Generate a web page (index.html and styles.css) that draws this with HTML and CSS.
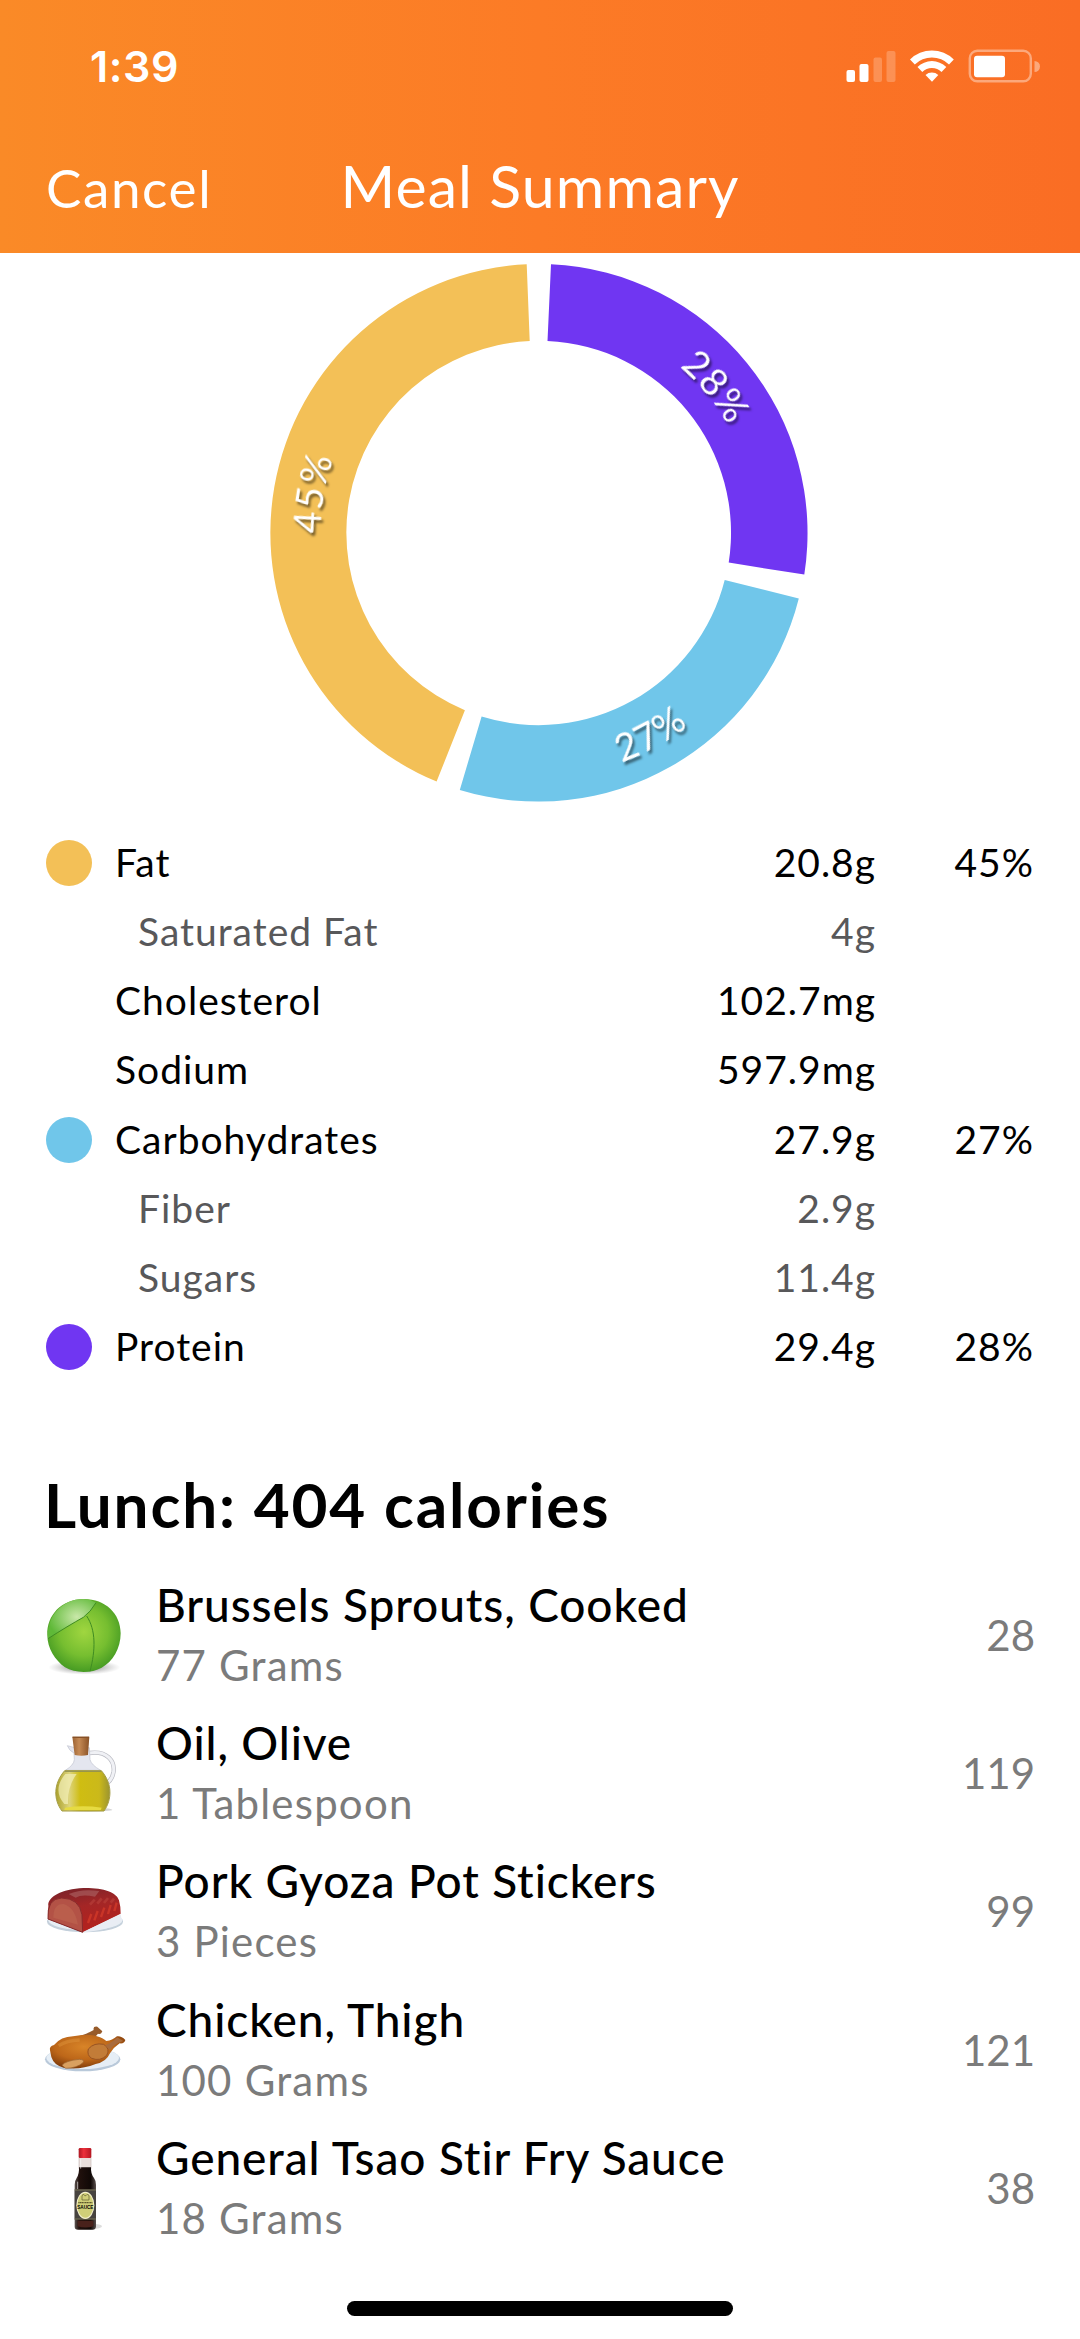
FILE: index.html
```html
<!DOCTYPE html>
<html lang="en">
<head>
    <meta charset="UTF-8">
    <meta name="viewport" content="width=device-width, initial-scale=1.0">
    <title>Meal Summary</title>
    <link rel="stylesheet" href="styles.css">
</head>
<body>
    <header class="header">
        <div class="status-bar">
            <span class="time">1:39</span>
            <svg class="status-icons" width="194" height="36" viewBox="0 0 194 36" fill="#fff">
                <rect x="0.5" y="22" width="8.5" height="12" rx="2"/>
                <rect x="13.5" y="16" width="9" height="18" rx="2"/>
                <rect x="27.5" y="9.5" width="8.5" height="24.5" rx="2" opacity=".22"/>
                <rect x="40.5" y="3" width="9" height="31" rx="2" opacity=".22"/>
                <path d="M64 11.5 A31 31 0 0 1 107.800 11.500 L103 16.500 A24.500 24.500 0 0 0 68.800 16.500 Z"/>
                <path d="M71.500 19 A20.500 20.500 0 0 1 100.300 19 L95.500 24 A13.500 13.500 0 0 0 76.300 24 Z"/>
                <path d="M79.500 27 A9.500 9.500 0 0 1 92.300 27 L86 33.800 Z"/>
                <rect x="123.8" y="2.8" width="61" height="30.5" rx="7.5" fill="none" stroke="#fff" stroke-width="2.4" opacity=".4"/>
                <rect x="128" y="7.7" width="31" height="21.5" rx="3"/>
                <path d="M188.500 13 a5.500 5.500 0 0 1 0 11 Z" opacity=".4"/>
            </svg>
        </div>
        <nav class="nav-bar">
            <a href="#" class="cancel">Cancel</a>
            <h1 class="title">Meal Summary</h1>
        </nav>
    </header>

    <main>
        <svg class="chart" width="1080" height="575" viewBox="0 253 1080 575">
            <defs>
                <path id="arc-top" d="M-109 -188.8 A218 218 0 0 1 109 -188.8"/>
                <path id="arc-bottom" d="M-122 211.3 A244 244 0 0 0 122 211.3"/>
            </defs>
            <path class="protein" d="M551 264.3 A269 269 0 0 1 804.3 574.6 L728.7 562.6 A192 192 0 0 0 547.5 341 Z"/>
            <path class="carbs" d="M798.8 598.6 A269 269 0 0 1 459.8 790 L481.6 716.5 A192 192 0 0 0 724.7 580 Z"/>
            <path class="fat" d="M436.6 781.6 A269 269 0 0 1 526.7 264.3 L529.7 341 A192 192 0 0 0 464.9 710.2 Z"/>
            <g class="chart-labels" transform="translate(538.5 533)">
                <text transform="rotate(50.5)"><textPath href="#arc-top" startOffset="50%">28%</textPath></text>
                <text transform="rotate(-29)"><textPath href="#arc-bottom" startOffset="50%">27%</textPath></text>
                <text transform="rotate(280)"><textPath href="#arc-top" startOffset="50%">45%</textPath></text>
            </g>
        </svg>

        <ul class="nutrients">
            <li><i class="dot fat"></i><span class="label">Fat</span><span class="value">20.8g</span><span class="percent">45%</span></li>
            <li class="sub"><span class="label">Saturated Fat</span><span class="value">4g</span></li>
            <li><span class="label">Cholesterol</span><span class="value">102.7mg</span></li>
            <li><span class="label">Sodium</span><span class="value">597.9mg</span></li>
            <li><i class="dot carbs"></i><span class="label">Carbohydrates</span><span class="value">27.9g</span><span class="percent">27%</span></li>
            <li class="sub"><span class="label">Fiber</span><span class="value">2.9g</span></li>
            <li class="sub"><span class="label">Sugars</span><span class="value">11.4g</span></li>
            <li><i class="dot protein"></i><span class="label">Protein</span><span class="value">29.4g</span><span class="percent">28%</span></li>
        </ul>

        <h2 class="meal-title">Lunch: 404 calories</h2>

        <ul class="foods">
            <li>
                <svg class="food-icon" viewBox="36 39 252 252">
                    <defs>
                        <radialGradient id="leaf" cx=".5" cy=".45" r=".6">
                            <stop offset="0" stop-color="#a0d640"/>
                            <stop offset=".55" stop-color="#76be30"/>
                            <stop offset="1" stop-color="#3c9420"/>
                        </radialGradient>
                        <radialGradient id="shine" cx=".6" cy=".45" r=".6">
                            <stop offset="0" stop-color="#c9e8a9"/>
                            <stop offset="1" stop-color="#5fb938"/>
                        </radialGradient>
                        <radialGradient id="shade">
                            <stop offset="0" stop-color="#444" stop-opacity=".8"/>
                            <stop offset="1" stop-color="#888" stop-opacity="0"/>
                        </radialGradient>
                    </defs>
                    <ellipse cx="163" cy="262" rx="108" ry="22" fill="url(#shade)"/>
                    <path d="M160 57 C225 56 272 100 272 160 C272 205 248 246 215 263 C185 280 135 280 105 262 C75 240 52 205 52 165 C50 105 95 58 160 57Z" fill="url(#leaf)"/>
                    <path d="M54 176 C48 108 98 56 162 57 Q182 58 198 68 Q182 96 160 112 Q115 137 54 176Z" fill="url(#shine)"/>
                    <path d="M54 176 Q115 137 160 112 Q182 96 198 68 M170 108 C198 150 197 210 180 274" fill="none" stroke="#3f8c22" stroke-width="3"/>
                </svg>
                <div class="food-text"><p class="food-name">Brussels Sprouts, Cooked</p><p class="food-amount">77 Grams</p></div>
                <span class="food-calories">28</span>
            </li>
            <li>
                <svg class="food-icon" viewBox="36 454 252 252">
                    <defs>
                        <linearGradient id="oil">
                            <stop offset="0" stop-color="#aba12c"/>
                            <stop offset=".25" stop-color="#ddd47c"/>
                            <stop offset=".45" stop-color="#cfbd12"/>
                            <stop offset=".8" stop-color="#cbb91a"/>
                            <stop offset="1" stop-color="#9b9430"/>
                        </linearGradient>
                        <linearGradient id="cork">
                            <stop offset="0" stop-color="#9b6232"/>
                            <stop offset=".4" stop-color="#c58a55"/>
                            <stop offset="1" stop-color="#8a5226"/>
                        </linearGradient>
                    </defs>
                    <ellipse cx="175" cy="690" rx="72" ry="6" fill="#999" opacity=".4"/>
                    <path d="M178 520 C232 512 254 545 251 575 Q248 598 232 610" fill="none" stroke="#b9bac2" stroke-width="13"/>
                    <path d="M178 520 C232 512 254 545 251 575 Q248 598 232 610" fill="none" stroke="#f0f1f5" stroke-width="9"/>
                    <path d="M112 498 L134 504 L178 504 L180 540 Q184 556 212 572 L106 572 Q132 556 133 540 L132 520 Q118 514 112 498Z" fill="#e4e6ef" stroke="#bfc2ce" stroke-width="2"/>
                    <path d="M104 573 H214 C248 612 246 660 222 694 H96 C70 660 70 612 104 573Z" fill="url(#oil)" stroke="#a49c42" stroke-width="3"/>
                    <path d="M106 583 H140 Q112 620 114 673 H103 C78 645 80 613 106 583Z" fill="#f2edb6" opacity=".75"/>
                    <path d="M105 684 Q160 676 215 684 L212 691 H103Z" fill="#e6db42"/>
                    <path d="M104 575 H214" stroke="#8d8e54" stroke-width="3"/>
                    <path d="M127 471 H178 L174 526 Q154 531 134 526Z" fill="url(#cork)"/>
                    <path d="M128 473 H177" stroke="#875127" stroke-width="4"/>
                </svg>
                <div class="food-text"><p class="food-name">Oil, Olive</p><p class="food-amount">1 Tablespoon</p></div>
                <span class="food-calories">119</span>
            </li>
            <li>
                <svg class="food-icon" viewBox="36 28 252 252">
                    <defs>
                        <linearGradient id="roast" x1="0" y1="0" x2=".3" y2="1">
                            <stop offset="0" stop-color="#74222a"/>
                            <stop offset=".5" stop-color="#a42626"/>
                            <stop offset="1" stop-color="#b3221e"/>
                        </linearGradient>
                    </defs>
                    <ellipse cx="165" cy="186" rx="114" ry="32" fill="#c4d0db"/>
                    <ellipse cx="166" cy="182" rx="111" ry="29" fill="#e7eef4"/>
                    <path d="M55 138 C52 112 95 88 160 85 C220 84 260 98 267 122 Q273 145 272 162 L158 218 L54 178Z" fill="url(#roast)"/>
                    <path d="M54 178 Q50 116 95 115 Q148 116 156 165 L158 218Z" fill="#b35246" stroke="#872a2b" stroke-width="3"/>
                    <path d="M70 174 Q70 132 100 133 Q134 142 144 195Z" fill="#c06852" opacity=".55"/>
                    <path d="M116 103 Q155 86 208 94 L195 111 Q155 102 137 114Z" fill="#ad6565" opacity=".6"/>
                    <path d="M180 135 l14 -15 M202 132 l13 -16 M222 130 l12 -15 M242 129 l10 -12" stroke="#c65045" stroke-width="8" opacity=".4"/>
                    <path d="M174 190 l10 -27 M193 182 l10 -28 M213 172 l10 -28 M234 163 l8 -27 M253 154 l7 -25" stroke="#e8452c" stroke-width="7" opacity=".5"/>
                    <path d="M158 218 L272 164 L276 184 Q240 212 158 218Z" fill="#e9edf4"/>
                </svg>
                <div class="food-text"><p class="food-name">Pork Gyoza Pot Stickers</p><p class="food-amount">3 Pieces</p></div>
                <span class="food-calories">99</span>
            </li>
            <li>
                <svg class="food-icon" viewBox="36 443 252 252">
                    <defs>
                        <radialGradient id="skin" cx=".45" cy=".35" r=".7">
                            <stop offset="0" stop-color="#d88428"/>
                            <stop offset=".55" stop-color="#bd6719"/>
                            <stop offset="1" stop-color="#763508"/>
                        </radialGradient>
                    </defs>
                    <ellipse cx="158" cy="597" rx="113" ry="36" fill="#b9c9da"/>
                    <ellipse cx="158" cy="593" rx="109" ry="33" fill="#e6eef6"/>
                    <path d="M125 533 Q168 523 191 509 Q188 497 202 499 L217 513 Q214 523 204 520 Q188 543 152 549Z" fill="#975b2a"/>
                    <path d="M60 570 Q57 558 72 554 Q93 529 129 528 C178 520 207 525 229 542 Q247 540 261 528 Q274 526 286 539 Q283 551 269 549 Q252 560 240 579 Q229 605 197 611 Q150 630 101 622 Q72 615 64 590Z" fill="url(#skin)"/>
                    <path d="M175 566 Q192 546 221 552 Q242 565 230 585 Q211 604 185 594 Q170 585 175 566Z" fill="#c27c38" stroke="#985322" stroke-width="3"/>
                    <path d="M226 555 Q247 547 261 531 L280 542 Q253 549 239 569Z" fill="#a96b3b"/>
                    <path d="M96 615 Q106 601 148 597 Q166 598 159 607 Q141 623 107 624Z" fill="#d9a060" stroke="#99602e" stroke-width="2"/>
                    <path d="M86 556 Q110 540 149 539" stroke="#e39a42" stroke-width="10" fill="none" opacity=".4"/>
                </svg>
                <div class="food-text"><p class="food-name">Chicken, Thigh</p><p class="food-amount">100 Grams</p></div>
                <span class="food-calories">121</span>
            </li>
            <li>
                <svg class="food-icon" viewBox="36 48 252 252">
                    <defs>
                        <linearGradient id="glass">
                            <stop offset="0" stop-color="#5e5552"/>
                            <stop offset=".2" stop-color="#21110d"/>
                            <stop offset=".75" stop-color="#100806"/>
                            <stop offset="1" stop-color="#5a504e"/>
                        </linearGradient>
                        <linearGradient id="cap">
                            <stop offset="0" stop-color="#ad1823"/>
                            <stop offset=".4" stop-color="#ed303b"/>
                            <stop offset="1" stop-color="#b51722"/>
                        </linearGradient>
                    </defs>
                    <ellipse cx="186" cy="289" rx="30" ry="8" fill="#bbb" opacity=".5"/>
                    <path d="M147 82 H183 V116 H147Z" fill="#e9dfdc" stroke="#c9bdb9" stroke-width="2"/>
                    <path d="M147 112 H183 Q182 132 192 144 Q198 152 198 164 V290 Q197 299 188 299 H144 Q134 299 134 290 V164 Q134 152 140 144 Q148 132 147 112Z" fill="url(#glass)"/>
                    <path d="M143 272 H190 V289 Q168 296 143 289Z" fill="#49211b"/>
                    <rect x="134" y="178" width="64" height="91" fill="#47433f"/>
                    <path d="M134 180 H198 M134 267 H198" stroke="#938b61" stroke-width="2"/>
                    <ellipse cx="166" cy="226" rx="27" ry="41" fill="#f4f0cd"/>
                    <ellipse cx="166" cy="226" rx="24" ry="37" fill="#d0cf78"/>
                    <path d="M156 198 l4 -6 l4 5 h4 l5 -5 l4 6 v12 h-21Z" fill="none" stroke="#5f5932" stroke-width="2"/>
                    <path d="M145 218 H187" stroke="#5c572c" stroke-width="4" stroke-dasharray="4 1"/>
                    <text class="bottle-text" x="166" y="238">SAUCE</text>
                    <path d="M152 86 V116 M143 155 V177" stroke="#fff" stroke-width="3" opacity=".6"/>
                    <rect x="146" y="54" width="38" height="30" rx="4" fill="url(#cap)"/>
                </svg>
                <div class="food-text"><p class="food-name">General Tsao Stir Fry Sauce</p><p class="food-amount">18 Grams</p></div>
                <span class="food-calories">38</span>
            </li>
        </ul>
    </main>

    <div class="home-indicator"></div>
</body>
</html>
```
FILE: styles.css
```css
* {
  box-sizing: border-box;
  margin: 0;
  padding: 0;
}

body {
  width: 1080px;
  height: 2339px;
  display: flex;
  flex-direction: column;
  overflow: hidden;
  background-color: #fff;
  color: #000;
  font-family: Lato, "Liberation Sans", sans-serif;
}

ul {
  list-style: none;
}

.header {
  height: 253px;
  background: linear-gradient(to right, #fa8a27, #fc7b26 50%, #fa6d24);
  color: #fff;
}

.status-bar {
  height: 132px;
  display: flex;
  align-items: center;
  justify-content: space-between;
  padding: 0 40px 0 90px;
}

.time {
  font-family: Inter, "Liberation Sans", sans-serif;
  font-size: 43px;
  font-weight: 600;
  letter-spacing: 0.6px;
}

.nav-bar {
  display: grid;
  grid-template-columns: 300px 480px 300px;
  align-items: baseline;
  line-height: 108px;
}

.cancel {
  padding-left: 46px;
  color: #fff;
  font-size: 53px;
  letter-spacing: 1.6px;
  text-decoration: none;
}

.title {
  font-size: 59px;
  font-weight: 400;
  letter-spacing: 1.1px;
  text-align: center;
  white-space: nowrap;
}

/* Donut chart */
.chart {
  display: block;
}

.chart-labels {
  fill: #fff;
  font-size: 38px;
  letter-spacing: 1px;
  text-anchor: middle;
  filter: drop-shadow(2px 3px 1px rgba(0, 0, 0, 0.5));
}

.fat {
  fill: #f3c057;
  background-color: #f3c057;
}

.carbs {
  fill: #70c6ea;
  background-color: #70c6ea;
}

.protein {
  fill: #7036f2;
  background-color: #7036f2;
}

/* Nutrient list */
.nutrients {
  padding: 0 46px;
}

.nutrients li {
  height: 69.25px;
  display: grid;
  grid-template-columns: 69px 1fr 300px 158px;
  align-items: center;
  font-size: 39px;
  letter-spacing: 1px;
}

.nutrients span {
  padding-bottom: 2px;
}

.dot {
  width: 46px;
  height: 46px;
  border-radius: 50%;
}

.label {
  grid-column: 2;
}

.value,
.percent {
  text-align: right;
}

.sub {
  color: #58585a;
}

.sub .label {
  padding-left: 23px;
}

/* Foods */
.meal-title {
  margin: 84px 0 24px;
  padding-left: 44px;
  font-size: 62px;
  font-weight: 700;
  letter-spacing: 1.85px;
  line-height: 76px;
}

.foods {
  padding: 0 45px 0 42px;
}

.foods li {
  height: 138.2px;
  display: flex;
  align-items: center;
}

.food-icon {
  width: 84px;
  height: 84px;
}

.food-text {
  flex: 1;
  padding: 0 0 1px 30px;
}

.food-name {
  font-size: 46px;
  font-weight: 500;
  letter-spacing: 0.9px;
  line-height: 62px;
}

.food-amount {
  color: #7b7b7b;
  font-size: 42px;
  letter-spacing: 1.2px;
  line-height: 59px;
}

.food-calories {
  color: #7b7b7b;
  font-size: 42px;
}

.bottle-text {
  font-family: "Liberation Sans", sans-serif;
  font-size: 14px;
  font-weight: 700;
  text-anchor: middle;
}

.home-indicator {
  width: 386px;
  height: 15px;
  margin: auto auto 23px;
  border-radius: 8px;
  background-color: #000;
}
```
